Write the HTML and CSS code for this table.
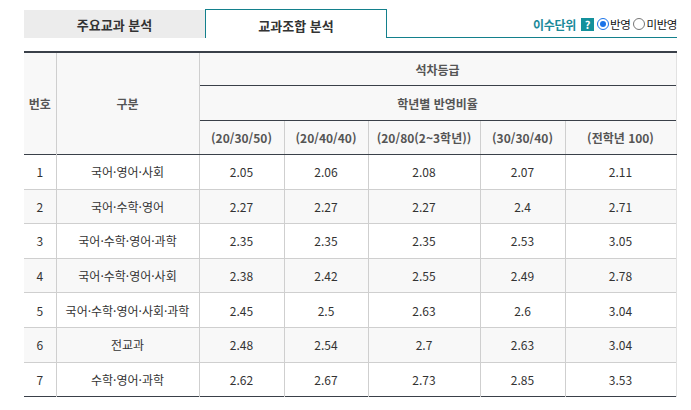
FILE: index.html
```html
<!DOCTYPE html>
<html lang="ko">
<head>
<meta charset="utf-8">
<link rel="stylesheet" href="styles.css">
</head>
<body>
<div class="wrap">
  <div class="tabs">
    <div class="tab">주요교과 분석</div>
    <div class="tab active">교과조합 분석</div>
    <div class="tab-rest">
      <span class="unit-label">이수단위</span>
      <span class="help">?</span>
      <label class="radio"><span class="dot on"></span><span class="rtext">반영</span></label>
      <label class="radio"><span class="dot"></span><span class="rtext">미반영</span></label>
    </div>
  </div>
  <table class="grade">
    <colgroup>
      <col style="width:32px"><col style="width:143px"><col style="width:85px"><col style="width:84px"><col style="width:112px"><col style="width:85px"><col style="width:111px">
    </colgroup>
    <thead>
      <tr class="h1">
        <th rowspan="3" class="first">번호</th>
        <th rowspan="3">구분</th>
        <th colspan="5" class="last">석차등급</th>
      </tr>
      <tr class="h2"><th colspan="5" class="last">학년별 반영비율</th></tr>
      <tr class="h3">
        <th>(20/30/50)</th><th>(20/40/40)</th><th>(20/80(2~3학년))</th><th>(30/30/40)</th><th class="last">(전학년 100)</th>
      </tr>
    </thead>
    <tbody>
      <tr><td class="first">1</td><td>국어·영어·사회</td><td>2.05</td><td>2.06</td><td>2.08</td><td>2.07</td><td class="last">2.11</td></tr>
      <tr><td class="first">2</td><td>국어·수학·영어</td><td>2.27</td><td>2.27</td><td>2.27</td><td>2.4</td><td class="last">2.71</td></tr>
      <tr><td class="first">3</td><td>국어·수학·영어·과학</td><td>2.35</td><td>2.35</td><td>2.35</td><td>2.53</td><td class="last">3.05</td></tr>
      <tr><td class="first">4</td><td>국어·수학·영어·사회</td><td>2.38</td><td>2.42</td><td>2.55</td><td>2.49</td><td class="last">2.78</td></tr>
      <tr><td class="first">5</td><td>국어·수학·영어·사회·과학</td><td>2.45</td><td>2.5</td><td>2.63</td><td>2.6</td><td class="last">3.04</td></tr>
      <tr><td class="first">6</td><td>전교과</td><td>2.48</td><td>2.54</td><td>2.7</td><td>2.63</td><td class="last">3.04</td></tr>
      <tr><td class="first">7</td><td>수학·영어·과학</td><td>2.62</td><td>2.67</td><td>2.73</td><td>2.85</td><td class="last">3.53</td></tr>
    </tbody>
  </table>
</div>
</body>
</html>
```
FILE: styles.css
```css
html, body {
  margin: 0;
  padding: 0;
  background: #fff;
}
body {
  font-family: "Noto Sans CJK KR", "Noto Sans", sans-serif;
  font-size: 12px;
  color: #333;
}
.wrap {
  padding: 9px 15px 0 24px;
  width: 652px;
}
.tabs {
  display: flex;
  align-items: flex-end;
  height: 29px;
}
.tab {
  width: 181px;
  height: 28px;
  background: #ececec;
  display: flex;
  align-items: center;
  justify-content: center;
  font-size: 13px;
  font-weight: 700;
  color: #333;
  box-sizing: border-box;
}
.tab.active {
  background: #fff;
  width: 182px;
  height: 29px;
  border: 1px solid #13808c;
  border-bottom: none;
  padding-top: 3px;
}
.tab-rest {
  flex: 1;
  height: 29px;
  border-bottom: 1px solid #13808c;
  display: flex;
  align-items: center;
  justify-content: flex-end;
  padding-top: 2px;
  box-sizing: border-box;
  margin-right: -1px;
}
.unit-label {
  color: #1a8a9a;
  font-weight: 700;
  font-size: 12px;
  letter-spacing: -0.3px;
  margin-right: 5px;
}
.help {
  width: 13px;
  height: 13px;
  background: #13919c;
  color: #fff;
  font-weight: 700;
  font-size: 11px;
  line-height: 13px;
  text-align: center;
  margin-right: 3px;
}
.radio {
  display: flex;
  align-items: center;
  color: #111;
  margin-right: 3px;
}
.radio:last-child {
  margin-right: 0;
}
.rtext {
  font-size: 11.5px;
  letter-spacing: -0.4px;
}
.dot {
  width: 10px;
  height: 10px;
  border: 1px solid #767676;
  border-radius: 50%;
  margin-right: 1px;
  position: relative;
  box-sizing: content-box;
}
.dot.on {
  border-color: #1a73e8;
}
.dot.on::after {
  content: "";
  position: absolute;
  left: 2px;
  top: 2px;
  width: 6px;
  height: 6px;
  border-radius: 50%;
  background: #1a73e8;
}
.grade {
  margin-top: 13px;
  width: 652px;
  border-collapse: collapse;
  table-layout: fixed;
  border-top: 2px solid #3a4049;
  border-bottom: 1px solid #3a4049;
}
.grade th {
  background: #f8f8f8;
  color: #555;
  font-weight: 600;
  font-size: 12px;
  border-left: 1px solid #cfcfcf;
  padding: 0;
  text-align: center;
}
.grade .first {
  border-left: none;
}
.grade th.last, .grade td.last {
  border-right: 1px solid #e2e2e2;
}
.grade .h1 th { height: 32px; }
.grade .h2 th { height: 34px; border-top: 1px solid #3a4049; }
.grade .h3 th { height: 33px; border-top: 1px solid #3a4049; border-bottom: 1px solid #3a4049; }
.grade td {
  height: 33.6px;
  padding: 0;
  text-align: center;
  border-left: 1px solid #cfcfcf;
  border-top: 1px solid #cfcfcf;
  color: #333;
}
.grade tbody tr:first-child td {
  border-top: 1px solid #3a4049;
}
.grade tbody tr:nth-child(even) td {
  background: #f8f8f8;
}
```
